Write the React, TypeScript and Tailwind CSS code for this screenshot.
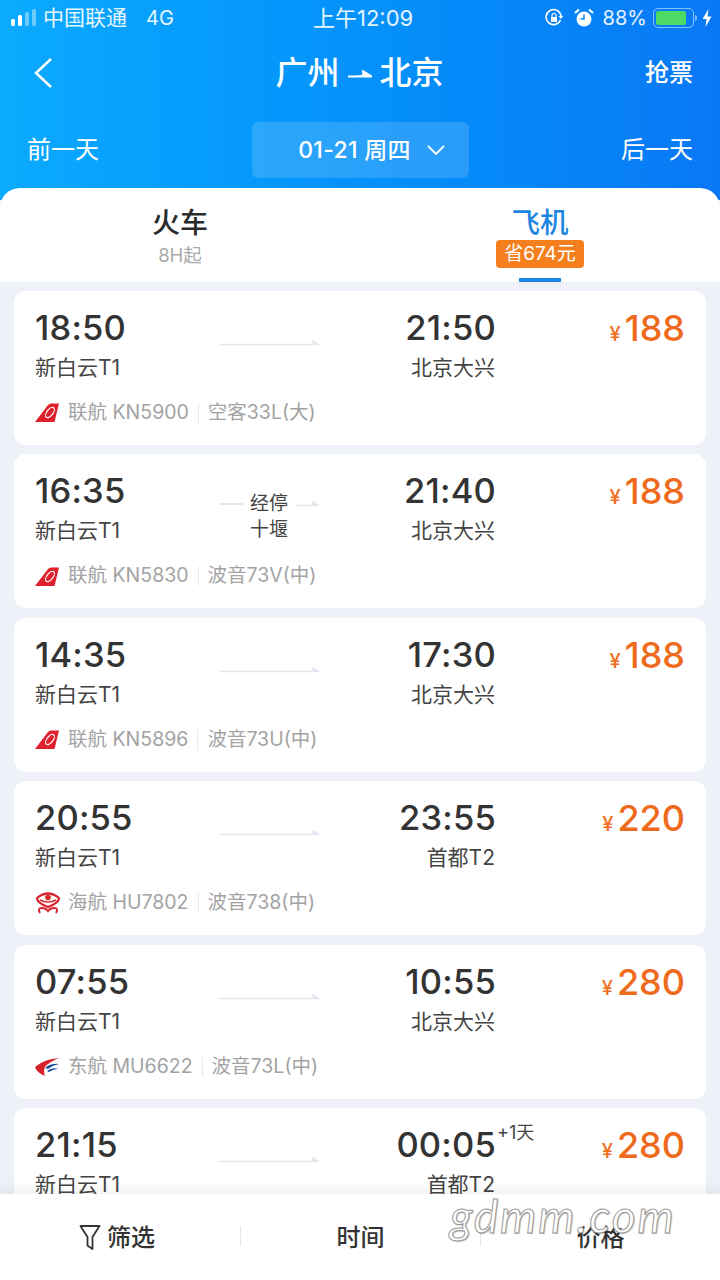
import React from "react";

const SANS = "font-['Inter','Noto_Sans_CJK_SC',sans-serif]";

type Airline = "kn" | "hu" | "mu";

const flights = [
  { dep: "18:50", arr: "21:50", to: "北京大兴", price: "188", airline: "kn" as Airline, no: "联航 KN5900", plane: "空客33L(大)" },
  { dep: "16:35", arr: "21:40", to: "北京大兴", price: "188", airline: "kn" as Airline, no: "联航 KN5830", plane: "波音73V(中)", stop: "十堰" },
  { dep: "14:35", arr: "17:30", to: "北京大兴", price: "188", airline: "kn" as Airline, no: "联航 KN5896", plane: "波音73U(中)" },
  { dep: "20:55", arr: "23:55", to: "首都T2", price: "220", airline: "hu" as Airline, no: "海航 HU7802", plane: "波音738(中)" },
  { dep: "07:55", arr: "10:55", to: "北京大兴", price: "280", airline: "mu" as Airline, no: "东航 MU6622", plane: "波音73L(中)" },
  { dep: "21:15", arr: "00:05", to: "首都T2", price: "280", airline: "mu" as Airline, no: "", plane: "", nextDay: true },
];

const AirlineLogo = ({ type }: { type: Airline }) => {
  if (type === "kn") {
    return (
      <svg width="24" height="19" viewBox="0 0 24 19" className="shrink-0">
        <path d="M0 19 L13 2 Q14.500 0.500 16 0.500 L24 0.500 L19.500 19 Z" fill="#e0202c" />
        <ellipse cx="15" cy="9.500" rx="3" ry="6" transform="rotate(38 15 9.500)" fill="none" stroke="#fff" strokeWidth="1.200" />
      </svg>
    );
  }
  if (type === "hu") {
    return (
      <svg width="26" height="22" viewBox="0 0 26 22" className="shrink-0">
        <g fill="none" stroke="#d9262e">
          <path d="M2 6 Q13 -3 24 6 Q24 11 13 15 Q2 11 2 6 Z" strokeWidth="2.200" />
          <path d="M5 8 Q13 12 21 8" strokeWidth="1.500" />
          <path d="M5 21 Q2 16 7 16 Q11 16 13 19 Q15 16 19 16 Q24 16 21 21" strokeWidth="2" />
        </g>
        <circle cx="13" cy="5.500" r="2.800" fill="#d9262e" />
      </svg>
    );
  }
  return (
    <svg width="24" height="20" viewBox="0 0 24 20" className="shrink-0">
      <path d="M0 10 Q9 2 24 1 Q14 5 10 10 Q8 14 10 19 Q2 16 0 10 Z" fill="#d7222c" />
      <path d="M10 11 Q16 6 24 7 Q17 8.500 13 12 Z" fill="#1d4f9e" />
      <path d="M12 14 Q17 10 23 12 Q17 12.500 14 15 Z" fill="#1d4f9e" />
    </svg>
  );
};

const RouteArrow = ({ width }: { width: number }) => (
  <svg width={width} height="6" viewBox={`0 0 ${width} 6`} className="block">
    <path d={`M0 4.500 H${width} L${width - 6} 1 V4.500`} stroke="#e4e7ef" strokeWidth="1.500" fill="#e4e7ef" />
  </svg>
);

const FlightCard = ({ f }: { f: (typeof flights)[number] }) => (
  <div className="h-[154px] shrink-0 rounded-[12px] bg-white px-[21px] pt-[15px]">
    <div className="flex">
      <div className="w-[184px]">
        <div className="text-[34.500px] leading-[44px] font-medium tracking-[0.2px] text-[#333]">{f.dep}</div>
        <div className="mt-[3px] text-[21px] leading-[30px] text-[#444]">新白云T1</div>
      </div>
      <div className="w-[100px] pt-[22px]">
        {f.stop ? (
          <div className="flex flex-col items-center">
            <div className="flex w-full items-center justify-between">
              <div className="h-[2px] w-[24px] bg-[#e4e7ef]" />
              <span className="text-[19px] leading-[26px] text-[#444]">经停</span>
              <RouteArrow width={24} />
            </div>
            <span className="text-[19px] leading-[26px] text-[#444]">{f.stop}</span>
          </div>
        ) : (
          <div className="pt-[12px]">
            <RouteArrow width={100} />
          </div>
        )}
      </div>
      <div className="w-[177px] text-right">
        <div className="relative text-[34.500px] leading-[44px] font-medium tracking-[0.2px] text-[#333]">
          {f.arr}
          {f.nextDay && (
            <span className="absolute top-[-2px] left-[178px] text-[18px] leading-[24px] font-normal tracking-normal whitespace-nowrap text-[#444]">
              +1天
            </span>
          )}
        </div>
        <div className="mt-[3px] pr-[1px] text-[21px] leading-[30px] text-[#444]">{f.to}</div>
      </div>
      <div className="flex h-[44px] flex-1 items-baseline justify-end">
        <span className="mr-[4px] text-[20px] font-medium text-[#f0701f]">¥</span>
        <span className="text-[36px] leading-[44px] font-medium text-[#ee6a1c]">{f.price}</span>
      </div>
    </div>
    {f.no && (
      <div className="mt-[16px] flex h-[28px] items-center text-[19.500px] text-[#a3a3a3]">
        <div className="flex w-[33px] justify-start">
          <AirlineLogo type={f.airline} />
        </div>
        <span>{f.no}</span>
        <div className="mx-[9px] h-[20px] w-px bg-[#e8e8e8]" />
        <span>{f.plane}</span>
      </div>
    )}
  </div>
);

const StatusBar = () => (
  <div className="relative flex h-[36px] items-center justify-between pr-[8px] pl-[10px] text-[21px] text-white/90">
    <div className="flex items-center">
      <svg width="26" height="18" viewBox="0 0 26 18" className="mr-[7px]">
        <rect x="1" y="10" width="4" height="7" rx="1.500" fill="#fff" />
        <rect x="8" y="6" width="4" height="11" rx="1.500" fill="#fff" />
        <rect x="15" y="3" width="4" height="14" rx="1.500" fill="#fff" fillOpacity="0.4" />
        <rect x="22" y="0" width="4" height="17" rx="1.500" fill="#fff" fillOpacity="0.4" />
      </svg>
      <span>中国联通</span>
      <span className="ml-[19px] text-[20px]">4G</span>
    </div>
    <span className="absolute left-[313px] text-[22px]">上午12:09</span>
    <div className="flex items-center">
      <svg width="20" height="20" viewBox="0 0 20 20" fill="none" stroke="#fff" strokeWidth="1.600" className="mr-[10px]">
        <path d="M16.500 12 A7.500 7.500 0 1 1 17 8" />
        <path d="M14.500 8 H19 L17 11 Z" fill="#fff" stroke="none" />
        <rect x="7" y="9" width="6" height="5" fill="#fff" stroke="none" />
        <path d="M8 9 V7.500 A2 2 0 0 1 12 7.500 V9" strokeWidth="1.200" />
      </svg>
      <svg width="20" height="20" viewBox="0 0 20 20" className="mr-[9px]">
        <circle cx="10" cy="11" r="7.500" fill="#fff" />
        <path d="M10 6.500 V11 H6.500" stroke="#0a8af8" strokeWidth="1.500" fill="none" />
        <path d="M1 5 L5 1.500 M19 5 L15 1.500" stroke="#fff" strokeWidth="2.200" />
      </svg>
      <span className="text-[20px]">88%</span>
      <div className="ml-[6px] flex h-[20px] w-[41px] items-center rounded-[5px] border-[1.500px] border-white/50 p-[2px]">
        <div className="h-full w-[85%] rounded-[2px] bg-[#4cd964]" />
      </div>
      <div className="ml-[1px] h-[6px] w-[2px] rounded-r-[2px] bg-white/50" />
      <svg width="10" height="18" viewBox="0 0 10 18" className="ml-[5px]">
        <path d="M6.500 0 L0.500 10 H4.500 L3.500 18 L9.500 7.500 H5.500 Z" fill="#fff" />
      </svg>
    </div>
  </div>
);

const Header = () => (
  <div className="h-[200px] shrink-0 bg-gradient-to-r from-[#0caaff] to-[#0a78f5] text-white">
    <StatusBar />
    <div className="relative flex h-[74px] items-center justify-between pr-[27px] pl-[33px]">
      <svg width="20" height="32" viewBox="0 0 20 32" fill="none" stroke="#fff" strokeWidth="2.500">
        <path d="M18 2 L3 16 L18 30" />
      </svg>
      <div className="absolute left-0 flex w-full items-center justify-center pr-[1px] text-[32px] font-medium">
        <span>广州</span>
        <svg width="24" height="9" viewBox="0 0 24 9" className="mx-[8px]">
          <path d="M0 7.500 H24 L15 2 V6" stroke="#fff" strokeWidth="1.800" fill="#fff" />
        </svg>
        <span>北京</span>
      </div>
      <span className="text-[24px] font-medium">抢票</span>
    </div>
    <div className="flex h-[68px] items-start justify-between px-[27px] pt-[12px]">
      <span className="mt-[10px] text-[24px] leading-[36px]">前一天</span>
      <div className="flex h-[56px] w-[217px] items-center justify-center gap-[16px] rounded-[6px] bg-white/15 pl-[23px]">
        <span className="text-[23px] font-medium tracking-[0.3px]">01-21 周四</span>
        <svg width="18" height="10" viewBox="0 0 18 10" fill="none" stroke="#fff" strokeWidth="1.800">
          <path d="M1 1 L9 9 L17 1" />
        </svg>
      </div>
      <span className="mt-[10px] text-[24px] leading-[36px]">后一天</span>
    </div>
  </div>
);

const Tabs = () => (
  <div className="-mt-[12px] flex h-[94px] shrink-0 rounded-t-[20px] bg-white">
    <div className="flex w-[360px] flex-col items-center pt-[17px]">
      <span className="text-[28px] leading-[36px] font-medium text-[#2b2b2b]">火车</span>
      <span className="mt-[1px] text-[18.500px] leading-[26px] text-[#aaa]">8H起</span>
    </div>
    <div className="relative flex w-[360px] flex-col items-center pt-[17px]">
      <span className="text-[28.500px] leading-[36px] font-medium text-[#1e86e2]">飞机</span>
      <span className="-mt-[1px] flex h-[28px] w-[88px] items-center justify-center rounded-[4px] bg-[#f57f1c] text-[19px] text-white">
        省674元
      </span>
      <div className="absolute bottom-0 h-[4px] w-[42px] bg-[#1e86e2]" />
    </div>
  </div>
);

const BottomBar = () => (
  <div className="relative flex h-[86px] shrink-0 items-start bg-white pt-[26px] text-[24px] font-medium text-[#333] shadow-[0_-6px_10px_rgba(0,0,0,0.05)]">
    <div className="flex w-[240px] items-center justify-center gap-[6px] pr-[6px]">
      <svg width="22" height="28" viewBox="0 0 22 28" fill="none" stroke="#333" strokeWidth="1.800" strokeLinejoin="round">
        <path d="M1.500 2 H20.500 L13.500 13 V25 L8.500 21.500 V13 Z" />
      </svg>
      <span>筛选</span>
    </div>
    <div className="mt-[6px] h-[20px] w-px bg-[#e6e6e6]" />
    <div className="flex flex-1 justify-center">时间</div>
    <div className="mt-[6px] h-[20px] w-px bg-[#e6e6e6]" />
    <div className="flex w-[239px] justify-center">价格</div>
    <span className="absolute top-[-6px] left-[450px] font-['Lato',sans-serif] text-[46px] leading-[56px] font-normal tracking-[2px] text-white italic [-webkit-text-stroke:1px_#999] [text-shadow:1px_1px_1px_rgba(0,0,0,0.25)]">
      gdmm.com
    </span>
  </div>
);

export default function App() {
  return (
    <div className={`flex h-[1280px] w-[720px] flex-col overflow-hidden bg-[#eff1f8] ${SANS}`}>
      <Header />
      <Tabs />
      <div className="flex flex-1 flex-col gap-[9.500px] overflow-hidden px-[14px] pt-[8.600px]">
        {flights.map((f) => (
          <FlightCard key={f.dep} f={f} />
        ))}
      </div>
      <BottomBar />
    </div>
  );
}
